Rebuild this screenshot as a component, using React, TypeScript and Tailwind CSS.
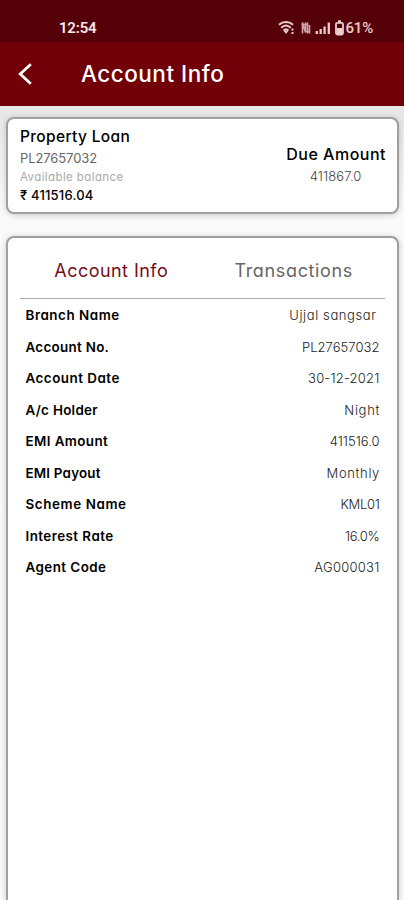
const details = [
  { label: "Branch Name", value: "Ujjal sangsar", labelClass: "tracking-[0.55px]", valueClass: "tracking-[0.6px] mr-[3px]" },
  { label: "Account No.", value: "PL27657032", labelClass: "tracking-[0.3px]", valueClass: "tracking-[0.05px]" },
  { label: "Account Date", value: "30-12-2021", labelClass: "tracking-[0.5px]", valueClass: "tracking-[0.2px]" },
  { label: "A/c Holder", value: "Night", labelClass: "tracking-[0.3px]", valueClass: "tracking-[0.7px] -mr-[0.6px]" },
  { label: "EMI Amount", value: "411516.0", labelClass: "tracking-[0.4px]", valueClass: "tracking-normal" },
  { label: "EMI Payout", value: "Monthly", labelClass: "tracking-[0.2px]", valueClass: "tracking-[0.65px] -mr-[0.5px]" },
  { label: "Scheme Name", value: "KML01", labelClass: "tracking-[0.6px]", valueClass: "tracking-[-0.3px]" },
  { label: "Interest Rate", value: "16.0%", labelClass: "tracking-[0.45px]", valueClass: "tracking-[-0.3px]" },
  { label: "Agent Code", value: "AG000031", labelClass: "tracking-[0.45px]", valueClass: "tracking-[0.25px]" },
];

function StatusIcons() {
  return (
    <svg width="68" height="16" viewBox="0 0 68 16" fill="none" stroke="#e9cfcf">
      {/* wifi */}
      <path d="M1 4.8C5 1.2 11 1.2 15 4.8M3.2 7.8C6.2 5 9.8 5 12.8 7.8M5.5 10.6C7.2 9 8.8 9 10.5 10.6" strokeWidth="2" />
      <path d="M5.5 10.8h5L8 14z" fill="#e9cfcf" stroke="none" />
      <path d="M14.5 8.5v2M14.5 12v2" strokeWidth="2" />
      {/* data arrows */}
      <path d="M24.5 13.5V2.5l3 10V2.5M29.5 2.5v11M31.5 5v8.5M23.5 4.5h6M26.5 11.5h5" strokeWidth="1.6" stroke="#c9a5a7" />
      {/* signal */}
      <path d="M38.8 14v-3M42.7 14V9M46.6 14V6.5M50.8 14V2.5" strokeWidth="2.3" />
      {/* battery */}
      <path d="M60 1.2h3" strokeWidth="1.8" />
      <rect x="58" y="2.8" width="7" height="11.8" rx="1.5" strokeWidth="1.8" />
      <path d="M59 8h5v6h-5z" fill="#e9cfcf" stroke="none" />
    </svg>
  );
}

export default function App() {
  return (
    <div className="h-[900px] w-[404px] overflow-hidden bg-[#fafafa] flex flex-col font-['Inter',sans-serif] [font-feature-settings:'cv11'] text-black whitespace-nowrap">
      <div className="h-[42px] shrink-0 bg-[#550008] flex items-start justify-between pl-[59px] pr-[31px] pt-5 text-[#f8eaea] font-['Roboto',sans-serif]">
        <span className="text-[15px] leading-4 font-semibold tracking-[-0.2px]">12:54</span>
        <div className="flex">
          <StatusIcons />
          <span className="text-[15px] leading-4 font-medium tracking-[-0.2px] text-[#e9cfcf]">61%</span>
        </div>
      </div>

      <header className="h-16 shrink-0 bg-[#710008] flex items-center text-white">
        <button className="ml-4 w-[18px]" aria-label="Back">
          <svg width="18" height="24" viewBox="0 0 18 24" fill="none" stroke="currentColor" strokeWidth="2.8">
            <path d="M14.8 2.2 4.2 12l10.6 9.8" />
          </svg>
        </button>
        <h1 className="ml-[47px] text-[22.5px] font-medium tracking-[0.5px]">Account Info</h1>
      </header>

      <main className="flex-1 flex flex-col bg-linear-to-b from-[#e6e6e6] to-[#fafafa] to-12% pl-1.5 pr-[5px] pt-[11px]">
        <section className="h-[97px] shrink-0 rounded-lg border-2 border-[#a0a0a0] bg-white shadow-[0_1px_6px_#0003] flex justify-between pl-3 pr-[11px]">
          <div className="pt-[5.5px]">
            <p className="text-[15.5px] leading-6 font-medium tracking-[0.35px]">Property Loan</p>
            <p className="text-[13px] leading-[19px] tracking-[-0.1px] text-[#666]">PL27657032</p>
            <p className="text-[11.5px] leading-[18px] tracking-[0.4px] text-[#aaa]">Available balance</p>
            <p className="text-[13px] leading-[19px] font-medium tracking-[0.2px]">₹ 411516.04</p>
          </div>
          <div className="pt-[23.4px] text-center">
            <p className="text-[16px] leading-6 font-medium tracking-[0.5px]">Due Amount</p>
            <p className="text-[13px] leading-5 text-[#444] font-light tracking-[0.1px] -ml-px">411867.0</p>
          </div>
        </section>

        <section className="mt-[22px] flex-1 rounded-t-lg border-2 border-b-0 border-[#a0a0a0] bg-white shadow-[0_1px_6px_#0003] px-3">
          <div className="h-[61px] border-b border-[#aaa] flex pt-[19px] text-[18px] leading-7">
            <div className="flex-1 text-center tracking-[0.45px] text-[#750d18]">Account Info</div>
            <div className="flex-1 text-center tracking-[0.65px] text-[#666]">Transactions</div>
          </div>
          <dl className="px-[5.5px] pt-[0.7px] text-[13px] leading-5">
            {details.map((d) => (
              <div key={d.label} className="h-[31.5px] flex items-center justify-between">
                <dt className={`text-[13.4px] font-semibold ${d.labelClass}`}>{d.label}</dt>
                <dd className={`font-light text-[#222] ${d.valueClass}`}>{d.value}</dd>
              </div>
            ))}
          </dl>
        </section>
      </main>
    </div>
  );
}
